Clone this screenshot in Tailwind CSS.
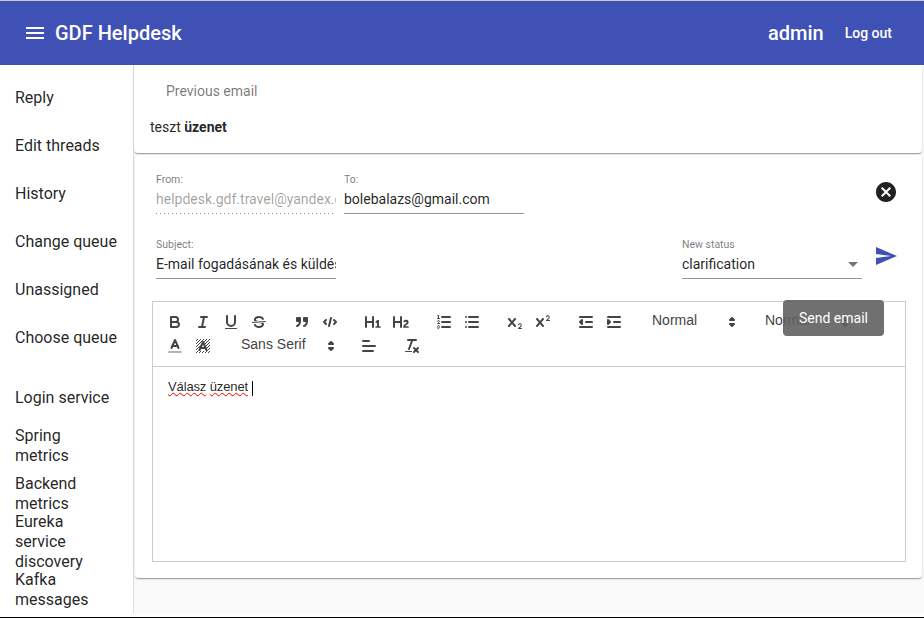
<!DOCTYPE html>
<html lang="en">
<head>
<meta charset="UTF-8" />
<title>GDF Helpdesk</title>
<script src="https://cdn.jsdelivr.net/npm/@tailwindcss/browser@4"></script>
</head>
<body class="w-[924px] h-[618px] overflow-hidden bg-white font-[Roboto,sans-serif] text-black/87">
<div class="flex flex-col h-full">
  <div class="h-px bg-[#c9c9c4]"></div>
  <!-- Header -->
  <header class="h-16 bg-[#3f51b5] text-white flex items-center pl-[23px] pr-8">
    <svg class="w-6 h-6 fill-white" viewBox="0 0 24 24"><path d="M3 18h18v-2H3v2zm0-5h18v-2H3v2zm0-7v2h18V6H3z"/></svg>
    <h1 class="ml-2 text-xl font-medium">GDF Helpdesk</h1>
    <div class="flex-1"></div>
    <span class="text-xl font-medium">admin</span>
    <button class="ml-[21px] text-sm font-medium">Log out</button>
  </header>
  <div class="flex h-[549px]">
    <!-- Sidebar -->
    <nav class="w-[134px] shrink-0 border-r border-[#e0e0e0] pt-[9px] text-base leading-5">
      <a class="h-12 flex items-center px-[15px]">Reply</a>
      <a class="h-12 flex items-center px-[15px]">Edit threads</a>
      <a class="h-12 flex items-center px-[15px]">History</a>
      <a class="h-12 flex items-center px-[15px]">Change queue</a>
      <a class="h-12 flex items-center px-[15px]">Unassigned</a>
      <a class="h-12 flex items-center px-[15px]">Choose queue</a>
      <div class="h-3"></div>
      <a class="h-12 flex items-center px-[15px]">Login service</a>
      <a class="h-12 flex items-center px-[15px]"><span class="w-[90px]">Spring metrics</span></a>
      <a class="h-12 flex items-center px-[15px]"><span class="w-[90px]">Backend metrics</span></a>
      <a class="h-12 flex items-center px-[15px]"><span class="w-[90px]">Eureka service discovery</span></a>
      <a class="h-12 flex items-center px-[15px]"><span class="w-[90px]">Kafka messages</span></a>
    </nav>
    <!-- Main -->
    <main class="flex-1 bg-[#fafafa] pr-0.5 relative">
      <section class="h-[88px] bg-white rounded-b shadow-[0_2px_1px_-1px_rgba(0,0,0,.2),0_1px_1px_0_rgba(0,0,0,.14),0_1px_3px_0_rgba(0,0,0,.12)] text-sm">
        <div class="pt-4 pl-8 leading-5 text-black/54">Previous email</div>
        <div class="pt-4 pl-4 leading-5">teszt <b>üzenet</b></div>
      </section>
      <section class="mt-0.5 ml-px h-[423px] bg-white rounded shadow-[0_2px_1px_-1px_rgba(0,0,0,.2),0_1px_1px_0_rgba(0,0,0,.14),0_1px_3px_0_rgba(0,0,0,.12)] pt-[18px]">
        <div class="flex pl-[21px] pr-6">
          <div class="w-[180px]">
            <label class="block h-3 text-[10.5px] leading-[14px] text-black/54">From:</label>
            <input class="mt-[5px] block w-full h-[18px] text-sm text-black/38 outline-none" value="helpdesk.gdf.travel@yandex.com" readonly />
            <div class="mt-[5px] h-px bg-[linear-gradient(to_right,rgba(0,0,0,.42)_0%,rgba(0,0,0,.42)_33%,transparent_0%)] bg-[length:4px_1px] bg-repeat-x"></div>
          </div>
          <div class="w-[180px] ml-2">
            <label class="block h-3 text-[10.5px] leading-[14px] text-black/54">To:</label>
            <input class="mt-[5px] block w-full h-[18px] text-sm outline-none" value="bolebalazs@gmail.com" />
            <div class="mt-[5px] h-px bg-black/42"></div>
          </div>
          <div class="flex-1"></div>
          <svg class="w-6 h-6 mt-[7px] fill-[#212121]" viewBox="0 0 24 24"><path d="M12 2C6.47 2 2 6.47 2 12s4.47 10 10 10 10-4.47 10-10S17.53 2 12 2zm5 13.59L15.59 17 12 13.41 8.41 17 7 15.59 10.59 12 7 8.41 8.41 7 12 10.59 15.59 7 17 8.41 13.41 12 17 15.59z"/></svg>
        </div>
        <div class="flex pl-[21px] pr-6 mt-6">
          <div class="w-[180px]">
            <label class="block h-3 text-[10.5px] leading-[14px] text-black/54">Subject:</label>
            <input class="mt-[5px] block w-full h-[18px] text-sm outline-none" value="E-mail fogadásának és küldésének tesztelése" />
            <div class="mt-[5px] h-px bg-black/42"></div>
          </div>
          <div class="flex-1"></div>
          <div class="w-[180px]">
            <label class="block h-3 text-[10.5px] leading-[14px] text-black/54">New status</label>
            <div class="mt-[5px] h-[18px] flex items-center justify-between text-sm leading-[18px]">
              <span>clarification</span>
              <span class="mr-[4px] mt-px border-x-[5px] border-t-[5px] border-x-transparent border-t-black/54"></span>
            </div>
            <div class="mt-[5px] h-px bg-black/42"></div>
          </div>
          <svg class="w-6 h-6 ml-3 mt-1.5 fill-[#3f51b5]" viewBox="0 0 24 24"><path d="M2.01 21L23 12 2.01 3 2 10l15 2-15 2z"/></svg>
        </div>
        <!-- Editor -->
        <div class="ml-[17px] mr-4 mt-[22px] h-[261px] border border-[#ccc] flex flex-col font-['Liberation_Sans',Arial,sans-serif] text-[#444]">
          <div class="h-[65px] border-b border-[#ccc] p-2 flex flex-wrap content-start">
            <div class="flex mr-[15px]">
              <button class="w-7 h-6 px-[5px] py-[3px]"><svg class="w-[18px] h-[18px] fill-none stroke-[#444] stroke-2 [stroke-linecap:round] [stroke-linejoin:round]" viewBox="0 0 18 18"><path d="M5,4H9.5A2.5,2.5,0,0,1,12,6.5v0A2.5,2.5,0,0,1,9.5,9H5A0,0,0,0,1,5,9V4A0,0,0,0,1,5,4Z"/><path d="M5,9h5.5A2.5,2.5,0,0,1,13,11.5v0A2.5,2.5,0,0,1,10.5,14H5a0,0,0,0,1,0,0V9A0,0,0,0,1,5,9Z"/></svg></button>
              <button class="w-7 h-6 px-[5px] py-[3px]"><svg class="w-[18px] h-[18px] fill-none stroke-[#444] stroke-2 [stroke-linecap:round] [stroke-linejoin:round]" viewBox="0 0 18 18"><line x1="7" x2="13" y1="4" y2="4"/><line x1="5" x2="11" y1="14" y2="14"/><line x1="8" x2="10" y1="14" y2="4"/></svg></button>
              <button class="w-7 h-6 px-[5px] py-[3px]"><svg class="w-[18px] h-[18px] fill-none stroke-[#444] stroke-2 [stroke-linecap:round] [stroke-linejoin:round]" viewBox="0 0 18 18"><path d="M5,3V9a4.012,4.012,0,0,0,4,4H9a4.012,4.012,0,0,0,4-4V3"/><rect fill="#444" stroke="none" height="1" rx="0.5" ry="0.5" width="12" x="3" y="15"/></svg></button>
              <button class="w-7 h-6 px-[5px] py-[3px]"><svg class="w-[18px] h-[18px] fill-none stroke-[#444] stroke-2 [stroke-linecap:round] [stroke-linejoin:round]" viewBox="0 0 18 18"><line stroke-width="1" x1="15.5" x2="2.5" y1="8.5" y2="9.5"/><path fill="#444" stroke="none" d="M9.007,8C6.542,7.791,6,7.519,6,6.5,6,5.792,7.283,5,9,5c1.571,0,2.765.679,2.969,1.309a1,1,0,0,0,1.9-.617C13.356,4.106,11.354,3,9,3,6.2,3,4,4.538,4,6.5a3.2,3.2,0,0,0,.5,1.843Z"/><path fill="#444" stroke="none" d="M8.984,10C11.457,10.208,12,10.479,12,11.5c0,.708-1.283,1.5-3,1.5-1.571,0-2.765-.679-2.969-1.309a1,1,0,1,0-1.9.617C4.644,13.894,6.646,15,9,15c2.8,0,5-1.538,5-3.5a3.2,3.2,0,0,0-.5-1.843Z"/></svg></button>
            </div>
            <div class="flex mr-[15px]">
              <button class="w-7 h-6 px-[5px] py-[3px]"><svg class="w-[18px] h-[18px] fill-none stroke-[#444] stroke-2 [stroke-linecap:round] [stroke-linejoin:round]" viewBox="0 0 18 18"><rect fill="#444" height="3" width="3" x="4" y="5"/><rect fill="#444" height="3" width="3" x="11" y="5"/><path d="M7,8c0,4.031-3,5-3,5"/><path d="M14,8c0,4.031-3,5-3,5"/></svg></button>
              <button class="w-7 h-6 px-[5px] py-[3px]"><svg class="w-[18px] h-[18px] fill-none stroke-[#444] stroke-2 [stroke-linecap:round] [stroke-linejoin:round]" viewBox="0 0 18 18"><polyline points="5 7 3 9 5 11"/><polyline points="13 7 15 9 13 11"/><line x1="10" x2="8" y1="5" y2="13"/></svg></button>
            </div>
            <div class="flex mr-[15px]">
              <button class="w-7 h-6 px-[5px] py-[3px]"><svg class="w-[18px] h-[18px] fill-[#444]" viewBox="0 0 18 18"><path d="M10,4V14a1,1,0,0,1-2,0V10H3v4a1,1,0,0,1-2,0V4A1,1,0,0,1,3,4V8H8V4a1,1,0,0,1,2,0Zm6.06787,9.209H14.98975V7.59863a.54085.54085,0,0,0-.605-.60547h-.62744a1.01119,1.01119,0,0,0-.748.29688L11.645,8.56641a.5435.5435,0,0,0-.022.8584l.28613.30762a.53861.53861,0,0,0,.84717.0332l.09912-.08789a1.2137,1.2137,0,0,0,.2417-.35254h.02246s-.01123.30859-.01123.60547V13.209H12.041a.54085.54085,0,0,0-.605.60547v.43945a.54085.54085,0,0,0,.605.60547h4.02686a.54085.54085,0,0,0,.605-.60547v-.43945A.54085.54085,0,0,0,16.06787,13.209Z"/></svg></button>
              <button class="w-7 h-6 px-[5px] py-[3px]"><svg class="w-[18px] h-[18px] fill-[#444]" viewBox="0 0 18 18"><path d="M16.73975,13.81445v.43945a.54085.54085,0,0,1-.605.60547H11.855a.58392.58392,0,0,1-.64893-.60547V14.0127c0-2.90527,3.39941-3.42187,3.39941-4.55469a.77675.77675,0,0,0-.84717-.78125,1.17684,1.17684,0,0,0-.83594.38477c-.2749.26367-.561.374-.85791.13184l-.4292-.34082c-.30811-.24219-.38525-.51758-.1543-.81445a2.97155,2.97155,0,0,1,2.45361-1.17676,2.45393,2.45393,0,0,1,2.68408,2.40918c0,2.45312-3.1792,2.92676-3.27832,3.93848h2.79443A.54085.54085,0,0,1,16.73975,13.81445ZM9,3A.99974.99974,0,0,0,8,4V8H3V4A1,1,0,0,0,1,4V14a1,1,0,0,0,2,0V10H8v4a1,1,0,0,0,2,0V4A.99974.99974,0,0,0,9,3Z"/></svg></button>
            </div>
            <div class="flex mr-[15px]">
              <button class="w-7 h-6 px-[5px] py-[3px]"><svg class="w-[18px] h-[18px] fill-none stroke-[#444] stroke-2 [stroke-linecap:round] [stroke-linejoin:round]" viewBox="0 0 18 18"><line x1="7" x2="15" y1="4" y2="4"/><line x1="7" x2="15" y1="9" y2="9"/><line x1="7" x2="15" y1="14" y2="14"/><line stroke-width="1" x1="2.5" x2="4.5" y1="5.5" y2="5.5"/><path fill="#444" stroke="none" d="M3.5,6A0.5,0.5,0,0,1,3,5.5V3.085l-0.276.138A0.5,0.5,0,0,1,2.053,3c-0.124-.247-0.023-0.324.224-0.447l1-.5A0.5,0.5,0,0,1,4,2.5v3A0.5,0.5,0,0,1,3.5,6Z"/><path stroke-width="1" d="M4.5,10.5h-2c0-.234,1.85-1.076,1.85-2.234A0.959,0.959,0,0,0,2.5,8.156"/><path stroke-width="1" d="M2.5,14.846a0.959,0.959,0,0,0,1.85-.109A0.7,0.7,0,0,0,3.75,14a0.688,0.688,0,0,0,.6-0.736,0.959,0.959,0,0,0-1.85-.109"/></svg></button>
              <button class="w-7 h-6 px-[5px] py-[3px]"><svg class="w-[18px] h-[18px] fill-none stroke-[#444] stroke-2 [stroke-linecap:round] [stroke-linejoin:round]" viewBox="0 0 18 18"><line x1="6" x2="15" y1="4" y2="4"/><line x1="6" x2="15" y1="9" y2="9"/><line x1="6" x2="15" y1="14" y2="14"/><line x1="3" x2="3" y1="4" y2="4"/><line x1="3" x2="3" y1="9" y2="9"/><line x1="3" x2="3" y1="14" y2="14"/></svg></button>
            </div>
            <div class="flex mr-[15px]">
              <button class="w-7 h-6 px-[5px] py-[3px]"><svg class="w-[18px] h-[18px] fill-[#444]" viewBox="0 0 18 18"><path d="M15.5,15H13.861a3.858,3.858,0,0,0,1.914-2.975,1.8,1.8,0,0,0-1.6-1.751A1.921,1.921,0,0,0,12.021,11.7a0.50013,0.50013,0,1,0,.957.291h0a0.914,0.914,0,0,1,1.053-.725,0.81,0.81,0,0,1,.744.762c0,1.076-1.16971,1.86982-1.93971,2.43082A1.45639,1.45639,0,0,0,12,15.5a0.5,0.5,0,0,0,.5.5h3A0.5,0.5,0,0,0,15.5,15Z"/><path d="M9.65,5.241a1,1,0,0,0-1.409.108L6,7.964,3.759,5.349A1,1,0,0,0,2.192,6.59178Q2.21541,6.6213,2.241,6.649L4.684,9.5,2.241,12.35A1,1,0,0,0,3.71,13.70722q0.02557-.02768.049-0.05722L6,11.036,8.241,13.65a1,1,0,1,0,1.567-1.24277Q9.78459,12.3777,9.759,12.35L7.316,9.5,9.759,6.651A1,1,0,0,0,9.65,5.241Z"/></svg></button>
              <button class="w-7 h-6 px-[5px] py-[3px]"><svg class="w-[18px] h-[18px] fill-[#444]" viewBox="0 0 18 18"><path d="M15.5,7H13.861a4.015,4.015,0,0,0,1.914-2.975,1.8,1.8,0,0,0-1.6-1.751A1.922,1.922,0,0,0,12.021,3.7a0.5,0.5,0,1,0,.957.291,0.917,0.917,0,0,1,1.053-.725,0.81,0.81,0,0,1,.744.762c0,1.077-1.164,1.925-1.934,2.486A1.423,1.423,0,0,0,12,7.5a0.5,0.5,0,0,0,.5.5h3A0.5,0.5,0,0,0,15.5,7Z"/><path d="M9.651,5.241a1,1,0,0,0-1.41.108L6,7.964,3.759,5.349a1,1,0,1,0-1.519,1.3L4.683,9.5,2.241,12.35a1,1,0,1,0,1.519,1.3L6,11.036l2.241,2.614a1,1,0,0,0,1.519-1.3L7.317,9.5,9.759,6.651A1,1,0,0,0,9.651,5.241Z"/></svg></button>
            </div>
            <div class="flex mr-[15px]">
              <button class="w-7 h-6 px-[5px] py-[3px]"><svg class="w-[18px] h-[18px] fill-none stroke-[#444] stroke-2 [stroke-linecap:round] [stroke-linejoin:round]" viewBox="0 0 18 18"><line x1="3" x2="15" y1="14" y2="14"/><line x1="3" x2="15" y1="4" y2="4"/><line x1="9" x2="15" y1="9" y2="9"/><polyline fill="#444" points="5 7 5 11 3 9 5 7"/></svg></button>
              <button class="w-7 h-6 px-[5px] py-[3px]"><svg class="w-[18px] h-[18px] fill-none stroke-[#444] stroke-2 [stroke-linecap:round] [stroke-linejoin:round]" viewBox="0 0 18 18"><line x1="3" x2="15" y1="14" y2="14"/><line x1="3" x2="15" y1="4" y2="4"/><line x1="9" x2="15" y1="9" y2="9"/><polyline fill="#444" points="3 7 3 11 5 9 3 7"/></svg></button>
            </div>
            <div class="w-[98px] h-6 mr-[15px] pl-[9px] flex justify-between text-sm font-medium leading-5">
              <span>Normal</span>
              <svg class="w-[18px] h-[18px] mt-[3px] fill-[#444] stroke-[#444] stroke-2 [stroke-linecap:round] [stroke-linejoin:round]" viewBox="0 0 18 18"><polygon points="7 11 9 13 11 11 7 11"/><polygon points="7 7 9 5 11 7 7 7"/></svg>
            </div>
            <div class="w-[98px] h-6 mr-[15px] pl-[9px] flex justify-between text-sm font-medium leading-5">
              <span>Normal</span>
              <svg class="w-[18px] h-[18px] mt-[3px] fill-[#444] stroke-[#444] stroke-2 [stroke-linecap:round] [stroke-linejoin:round]" viewBox="0 0 18 18"><polygon points="7 11 9 13 11 11 7 11"/><polygon points="7 7 9 5 11 7 7 7"/></svg>
            </div>
            <div class="flex mr-[15px]">
              <button class="w-7 h-6 px-[5px] py-[3px]"><svg class="w-[18px] h-[18px] fill-none stroke-[#444] stroke-2 [stroke-linecap:round] [stroke-linejoin:round]" viewBox="0 0 18 18"><line opacity="0.4" x1="3" x2="15" y1="15" y2="15"/><polyline points="5.5 11 9 3 12.5 11"/><line x1="11.63" x2="6.38" y1="9" y2="9"/></svg></button>
              <button class="w-7 h-6 px-[5px] py-[3px]"><svg class="w-[18px] h-[18px] fill-none stroke-[#444] stroke-2 [stroke-linecap:round] [stroke-linejoin:round]" viewBox="0 0 18 18"><defs><pattern id="hatch" width="3" height="3" patternUnits="userSpaceOnUse"><rect x="0" y="2" width="1" height="1" fill="#444" stroke="none"/><rect x="1" y="1" width="1" height="1" fill="#444" stroke="none"/><rect x="2" y="0" width="1" height="1" fill="#444" stroke="none"/></pattern></defs><rect x="2" y="2" width="14" height="14" fill="url(#hatch)" stroke="none"/><polygon fill="#fff" stroke="#fff" points="5.5 13 9 5 12.5 13"/><polyline points="5.5 13 9 5 12.5 13"/><line x1="11.63" x2="6.38" y1="11" y2="11"/></svg></button>
            </div>
            <div class="w-[108px] h-6 mr-[15px] pl-[9px] flex justify-between text-sm font-medium leading-5">
              <span>Sans Serif</span>
              <svg class="w-[18px] h-[18px] mt-[3px] fill-[#444] stroke-[#444] stroke-2 [stroke-linecap:round] [stroke-linejoin:round]" viewBox="0 0 18 18"><polygon points="7 11 9 13 11 11 7 11"/><polygon points="7 7 9 5 11 7 7 7"/></svg>
            </div>
            <button class="w-7 h-6 px-[5px] py-[3px] mr-[15px]"><svg class="w-[18px] h-[18px] fill-none stroke-[#444] stroke-2 [stroke-linecap:round] [stroke-linejoin:round]" viewBox="0 0 18 18"><line x1="3" x2="15" y1="9" y2="9"/><line x1="3" x2="13" y1="14" y2="14"/><line x1="3" x2="9" y1="4" y2="4"/></svg></button>
            <button class="w-7 h-6 px-[5px] py-[3px]"><svg class="w-[18px] h-[18px] fill-none stroke-[#444] stroke-2 [stroke-linecap:round] [stroke-linejoin:round]" viewBox="0 0 18 18"><line x1="5" x2="13" y1="3" y2="3"/><line x1="6" x2="9.35" y1="12" y2="3"/><line x1="11" x2="15" y1="11" y2="15"/><line x1="15" x2="11" y1="11" y2="15"/><rect fill="#444" stroke="none" height="1" rx="0.5" ry="0.5" width="7" x="2" y="14"/></svg></button>
          </div>
          <div class="flex-1 px-[15px] pt-[11px] text-[13px] leading-[18.5px] tracking-[-0.13px] text-black/87">
            <span class="underline decoration-wavy decoration-[#f00] decoration-1">Válasz</span> <span class="underline decoration-wavy decoration-[#f00] decoration-1">üzenet</span> <span class="inline-block ml-px w-px h-[15px] bg-black align-[-5px]"></span>
          </div>
        </div>
      </section>
      <div class="absolute left-[649px] top-[235px] h-9 px-4 rounded bg-[#616161]/90 text-white text-sm leading-9">Send email</div>
    </main>
  </div>
  <div class="flex-1"></div>
  <div class="h-px bg-black"></div>
</div>
</body>
</html>
